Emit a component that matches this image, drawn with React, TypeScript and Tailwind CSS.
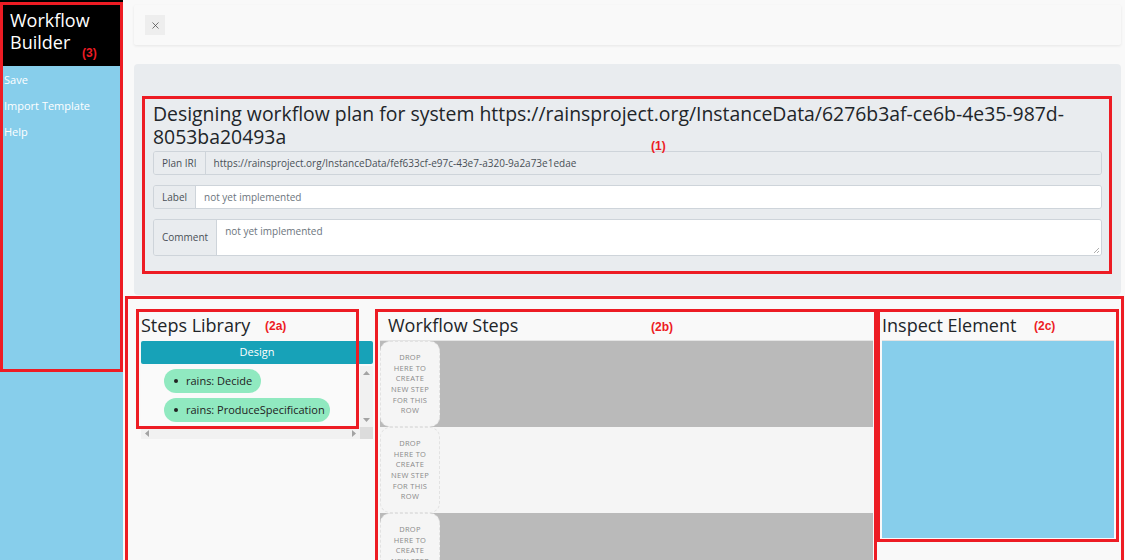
import React from 'react';
import { X } from 'lucide-react';

const dropText = ['DROP', 'HERE TO', 'CREATE', 'NEW STEP', 'FOR THIS', 'ROW'];

function DropZone() {
  return (
    <div className="w-[60px] h-[86px] shrink-0 rounded-[10px] bg-[#f5f5f5] border border-dashed border-[#e2e2e2] flex flex-col items-center justify-center text-[7.5px] leading-[10.7px] text-[#8a8a8a] uppercase tracking-[0.3px]">
      {dropText.map((t) => (
        <span key={t}>{t}</span>
      ))}
    </div>
  );
}

function StepRow({ dark }: { dark: boolean }) {
  return (
    <div className={`h-[86px] shrink-0 flex ${dark ? 'bg-[#bababa]' : 'bg-[#f5f5f5]'}`}>
      <DropZone />
    </div>
  );
}

function InputGroup({ label, value, disabled, tall }: { label: string; value: string; disabled?: boolean; tall?: boolean }) {
  return (
    <div className={`flex shrink-0 border border-[#ced4da] rounded-[3px] overflow-hidden text-[10px] ${tall ? 'h-[37px]' : 'h-[24px]'}`}>
      <div className="px-[8px] bg-[#e9ecef] border-r border-[#ced4da] text-[#495057] flex items-center">{label}</div>
      <div className={`flex-1 relative px-[8px] ${disabled ? 'bg-[#e9ecef] text-[#495057]' : 'bg-white text-[#6c757d]'} ${tall ? 'pt-[4px]' : 'flex items-center'}`}>
        {value}
        {tall && (
          <svg className="absolute right-[1px] bottom-[1px]" width="7" height="7" viewBox="0 0 7 7">
            <path d="M6 1 L1 6 M6 4 L4 6" stroke="#999" strokeWidth="0.8" />
          </svg>
        )}
      </div>
    </div>
  );
}

function RedBox({ cls }: { cls: string }) {
  return <div className={`absolute border-[3px] border-[#ed1c24] pointer-events-none ${cls}`} />;
}

function RedLabel({ cls, text }: { cls: string; text: string }) {
  return <div className={`absolute text-[#ed1c24] font-bold text-[12px] font-['Liberation_Sans',sans-serif] ${cls}`}>{text}</div>;
}

export default function App() {
  return (
    <div className="relative w-[1125px] h-[560px] overflow-hidden flex bg-[#f9f9f9] font-['Open_Sans',sans-serif] text-[#212529]">
      {/* Sidebar */}
      <div className="w-[123px] shrink-0 flex flex-col bg-[#87ceeb]">
        <div className="h-[66px] shrink-0 bg-black text-white text-[18px] leading-[22px] px-[10px] pt-[9px]">
          Workflow
          <br />
          Builder
        </div>
        <nav className="flex flex-col text-white text-[11px] px-[4px] pt-[1px]">
          <span className="h-[26px] flex items-center">Save</span>
          <span className="h-[26px] flex items-center">Import Template</span>
          <span className="h-[26px] flex items-center">Help</span>
        </nav>
      </div>

      {/* Main */}
      <div className="flex-1 flex flex-col pl-[11px] pr-[4px] pt-[5px]">
        <div className="h-[40px] shrink-0 bg-[#f9f9f9] shadow-[0_1px_3px_rgba(0,0,0,0.08)] rounded-[2px] flex items-center px-[11px]">
          <button className="w-[20px] h-[20px] bg-[#eeeeee] flex items-center justify-center">
            <X size={11} strokeWidth={1.6} color="#444" />
          </button>
        </div>

        <div className="mt-[19px] h-[231px] shrink-0 bg-[#e9ecef] rounded-[4px] px-[19px] pt-[38px]">
          <h1 className="text-[19.4px] leading-[23px] text-[#212529] mb-[3px]">
            Designing workflow plan for system https://rainsproject.org/InstanceData/6276b3af-ce6b-4e35-987d-
            <br />
            8053ba20493a
          </h1>
          <div className="flex flex-col gap-[10px]">
            <InputGroup label="Plan IRI" value="https://rainsproject.org/InstanceData/fef633cf-e97c-43e7-a320-9a2a73e1edae" disabled />
            <InputGroup label="Label" value="not yet implemented" />
            <InputGroup label="Comment" value="not yet implemented" tall />
          </div>
        </div>

        {/* Bottom columns */}
        <div className="flex shrink-0 mt-[15px] pl-[7px] gap-[7px]">
          <div className="w-[232px] shrink-0">
            <h2 className="text-[18px] h-[31px] leading-[31px]">Steps Library</h2>
            <div className="h-[23px] bg-[#17a2b8] rounded-[2px] text-white text-[11px] flex items-center justify-center">Design</div>
            <div className="flex h-[61px] mt-[2px] bg-[#fafafa]">
              <ul className="flex-1 pl-[23px] pt-[3px] flex flex-col gap-[5px]">
                <li className="self-start h-[24px] rounded-full bg-[#90e9c0] flex items-center pl-[10px] pr-[9px] text-[11px] text-[#222]">
                  <span className="w-[4px] h-[4px] rounded-full bg-[#222] mr-[8px]" />
                  rains: Decide
                </li>
                <li className="self-start h-[24px] rounded-full bg-[#90e9c0] flex items-center pl-[10px] pr-[5px] text-[11px] text-[#222]">
                  <span className="w-[4px] h-[4px] rounded-full bg-[#222] mr-[8px]" />
                  rains: ProduceSpecification
                </li>
              </ul>
              <div className="w-[13px] bg-[#f1f1f1] flex flex-col justify-between items-center py-[5px]">
                <svg width="7" height="4" viewBox="0 0 7 4"><path d="M3.5 0 L7 4 L0 4Z" fill="#a3a3a3" /></svg>
                <svg width="7" height="4" viewBox="0 0 7 4"><path d="M0 0 L7 0 L3.5 4Z" fill="#a3a3a3" /></svg>
              </div>
            </div>
            <div className="flex h-[12px]">
              <div className="flex-1 bg-[#f1f1f1] flex justify-between items-center px-[4px]">
                <svg width="4" height="7" viewBox="0 0 4 7"><path d="M4 0 L4 7 L0 3.5Z" fill="#a3a3a3" /></svg>
                <svg width="4" height="7" viewBox="0 0 4 7"><path d="M0 0 L4 3.5 L0 7Z" fill="#a3a3a3" /></svg>
              </div>
              <div className="w-[13px] bg-[#dcdcdc]" />
            </div>
          </div>

          <div className="w-[493px] shrink-0 flex flex-col">
            <h2 className="text-[18px] h-[31px] shrink-0 leading-[31px] pl-[8px] border-b border-[#e4e4e4]">Workflow Steps</h2>
            <StepRow dark />
            <StepRow dark={false} />
            <StepRow dark />
          </div>

          <div className="w-[232px] shrink-0 ml-[2px]">
            <h2 className="text-[18px] h-[31px] leading-[31px] border-b border-[#e4e4e4]">Inspect Element</h2>
            <div className="h-[197px] bg-[#87ceeb]" />
          </div>
        </div>
      </div>

      {/* Annotations */}
      <RedBox cls="left-0 top-[2px] w-[123px] h-[370px]" />
      <RedLabel cls="left-[82px] top-[44px]" text="(3)" />
      <RedBox cls="left-[142px] top-[96px] w-[970px] h-[178px]" />
      <RedLabel cls="left-[651px] top-[137px]" text="(1)" />
      <RedBox cls="left-[125px] top-[296px] w-[999px] h-[270px]" />
      <RedBox cls="left-[136px] top-[309px] w-[223px] h-[120px]" />
      <RedLabel cls="left-[265px] top-[317px]" text="(2a)" />
      <RedBox cls="left-[375px] top-[309px] w-[502px] h-[260px]" />
      <RedLabel cls="left-[651px] top-[318px]" text="(2b)" />
      <RedBox cls="left-[877px] top-[309px] w-[242px] h-[233px]" />
      <RedLabel cls="left-[1034px] top-[317px]" text="(2c)" />
    </div>
  );
}
